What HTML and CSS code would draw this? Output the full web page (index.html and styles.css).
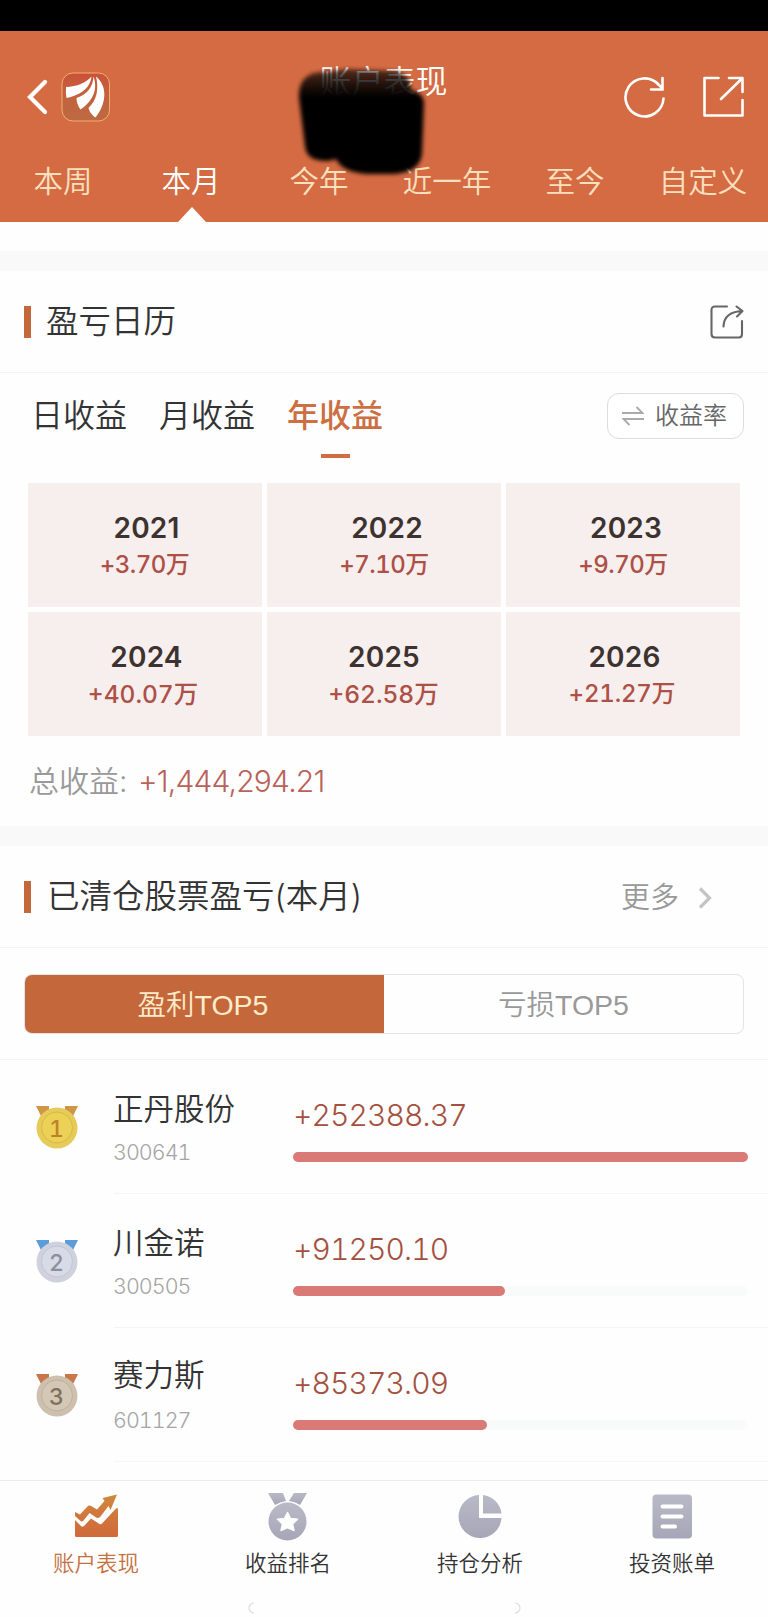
FILE: index.html
```html
<!DOCTYPE html>
<html lang="zh-CN">
<head>
    <meta charset="UTF-8">
    <meta name="viewport" content="width=device-width, initial-scale=1.0">
    <title>账户表现</title>
    <link rel="stylesheet" href="styles.css">
</head>
<body>
    <div class="status-bar"></div>
    <header class="header">
        <div class="header-top">
            <div class="header-left">
                <svg class="back" width="22" height="38" viewBox="0 0 22 38"><path d="M19 4 L4 19 L19 34" fill="none" stroke="#fff" stroke-width="4.2" stroke-linecap="round" stroke-linejoin="miter"/></svg>
                <svg width="50" height="50" viewBox="0 0 50 50">
                    <defs>
                        <linearGradient id="logoBg" x1="0" y1="0" x2="0" y2="1">
                            <stop offset="0" stop-color="#cb5038"/>
                            <stop offset="0.4" stop-color="#c4613d"/>
                            <stop offset="1" stop-color="#bd6a42"/>
                        </linearGradient>
                    </defs>
                    <rect x="1" y="1" width="47.5" height="48" rx="11" fill="url(#logoBg)" stroke="#f0b070" stroke-width="1"/>
                    <path d="M30.500 4.500 C25 11 16 14.500 5 15 Q4.500 21 5.500 26 C17 23.500 29 18 30.500 4.500Z" fill="#fff"/>
                    <path d="M32.500 4.500 C32 15 26 22.500 15.500 26 Q15.500 32 19.500 37.500 C31 30 37.500 18 32.500 4.500Z" fill="#fff"/>
                    <path d="M35 4.500 C38 17 36 28 27.500 36 Q29 42 34.500 45.500 C46 31 46.500 14 35 4.500Z" fill="#fff"/>
                </svg>
            </div>
            <h1 class="title">账户表现</h1>
            <div class="header-right">
                <svg width="42" height="42" viewBox="0 0 42 42" fill="none" stroke="#fff" stroke-width="2.6" stroke-linecap="round"><path d="M39.500 22.500 A19 19 0 1 1 34.500 8.500 L38 12"/><path d="M38.500 2 V13.500 H27"/></svg>
                <svg width="42" height="42" viewBox="0 0 42 42" fill="none" stroke="#fff" stroke-width="2.6" stroke-linecap="round" stroke-linejoin="round"><path d="M15.500 2 H1.500 V39.500 H39.500 V24"/><path d="M26 2 H39.500 V16 M39 2.500 L18 23"/></svg>
            </div>
        </div>
        <nav class="periods">
            <span>本周</span>
            <span class="active">本月</span>
            <span>今年</span>
            <span>近一年</span>
            <span>至今</span>
            <span>自定义</span>
        </nav>
        <svg class="scribble" width="144" height="120" viewBox="0 0 144 120">
            <defs>
                <linearGradient id="ink" x1="0" y1="0" x2="0" y2="1">
                    <stop offset="0" stop-color="#000" stop-opacity="0.6"/>
                    <stop offset="0.15" stop-color="#000" stop-opacity="0.84"/>
                    <stop offset="0.27" stop-color="#000"/>
                </linearGradient>
                <filter id="soft" x="-10%" y="-10%" width="120%" height="120%"><feGaussianBlur stdDeviation="2"/></filter>
            </defs>
            <path d="M24 9 L58 5 L104 7 Q120 9 121 26 Q134 29 134 40 L132 90 Q130 108 104 110 L76 110 Q52 108 46 95 Q36 99 24 95 Q16 92 15 82 L9 34 Q8 14 24 9Z" fill="url(#ink)" filter="url(#soft)"/>
        </svg>
    </header>

    <section class="card calendar">
        <div class="card-head">
            <h2>盈亏日历</h2>
            <svg width="34" height="34" viewBox="0 0 34 34" fill="none" stroke="#666" stroke-width="2.1" stroke-linecap="round" stroke-linejoin="round"><path d="M17 1.500 H5 Q1.500 1.500 1.500 5 V29 Q1.500 32.500 5 32.500 H29 Q32 32.500 32 29 V16"/><path d="M13.500 21.500 Q14 7 32 6 M26.500 1.500 L32.500 6 L27 11.500"/></svg>
        </div>
        <div class="calendar-tabs">
            <span>日收益</span>
            <span>月收益</span>
            <span class="active">年收益</span>
            <button class="rate-button">
                <svg width="22" height="20" viewBox="0 0 22 20" fill="none" stroke="#aaa" stroke-width="1.9"><path d="M0 7 H20.500 L14.500 1"/><path d="M22 13 H1.500 L7.500 19"/></svg>
                收益率
            </button>
        </div>
        <div class="years">
            <div class="year y2021"><b>2021</b><span>+3.70万</span></div>
            <div class="year y2022"><b>2022</b><span>+7.10万</span></div>
            <div class="year y2023"><b>2023</b><span>+9.70万</span></div>
            <div class="year y2024"><b>2024</b><span>+40.07万</span></div>
            <div class="year y2025"><b>2025</b><span>+62.58万</span></div>
            <div class="year y2026"><b>2026</b><span>+21.27万</span></div>
        </div>
        <div class="total">总收益: <span>+1,444,294.21</span></div>
    </section>

    <section class="card cleared">
        <div class="card-head">
            <h2>已清仓股票盈亏(本月)</h2>
            <a class="more">更多 <svg width="14" height="22" viewBox="0 0 14 22"><path d="M2 1.500 L11.500 11 L2 20.500" fill="none" stroke="#c4c4c4" stroke-width="3.2"/></svg></a>
        </div>
        <div class="toggle-wrap">
            <div class="toggle">
                <span class="active">盈利TOP5</span>
                <span>亏损TOP5</span>
            </div>
        </div>
        <div class="stock">
            <svg class="medal" width="42" height="43" viewBox="0 0 42 43">
                <path d="M0 0 H13 V8 L5 10Z M42 0 H29 V8 L37 10Z" fill="#cf9648"/>
                <circle cx="21" cy="22" r="20.5" fill="#e6cb58"/>
                <circle cx="21" cy="21.5" r="15.5" fill="#ebd257" stroke="#d6b748" stroke-width="1"/>
                <text x="20.5" y="30.5" text-anchor="middle" fill="#bf8128">1</text>
            </svg>
            <div class="stock-name"><strong>正丹股份</strong><small>300641</small></div>
            <div class="stock-profit"><span>+252388.37</span><div class="bar"><i style="width: 100%"></i></div></div>
        </div>
        <div class="stock">
            <svg class="medal" width="42" height="43" viewBox="0 0 42 43">
                <path d="M0 0 H13 V8 L5 10Z M42 0 H29 V8 L37 10Z" fill="#5b9cdb"/>
                <circle cx="21" cy="22" r="20.5" fill="#cfd1dc"/>
                <circle cx="21" cy="21.5" r="15.5" fill="#d7dae7" stroke="#c2c5d2" stroke-width="1"/>
                <text x="20.5" y="30.5" text-anchor="middle" fill="#8d8f9b">2</text>
            </svg>
            <div class="stock-name"><strong>川金诺</strong><small>300505</small></div>
            <div class="stock-profit"><span>+91250.10</span><div class="bar"><i style="width: 46.7%"></i></div></div>
        </div>
        <div class="stock third">
            <svg class="medal" width="42" height="43" viewBox="0 0 42 43">
                <path d="M0 0 H13 V8 L5 10Z M42 0 H29 V8 L37 10Z" fill="#c9764a"/>
                <circle cx="21" cy="22" r="20.5" fill="#cdc0ae"/>
                <circle cx="21" cy="21.5" r="15.5" fill="#d3c7b5" stroke="#beb09c" stroke-width="1"/>
                <text x="20.5" y="30.5" text-anchor="middle" fill="#82705f">3</text>
            </svg>
            <div class="stock-name"><strong>赛力斯</strong><small>601127</small></div>
            <div class="stock-profit"><span>+85373.09</span><div class="bar"><i style="width: 42.7%"></i></div></div>
        </div>
    </section>

    <nav class="bottom-nav">
        <a class="active">
            <svg width="48" height="48" viewBox="0 0 48 48">
                <defs>
                    <linearGradient id="orange" x1="0" y1="0" x2="0" y2="1"><stop offset="0" stop-color="#cf8a3c"/><stop offset="0.5" stop-color="#d1763d"/><stop offset="1" stop-color="#cf6a3a"/></linearGradient>
                    <linearGradient id="grey" x1="0" y1="0" x2="0" y2="1"><stop offset="0" stop-color="#b9b9c6"/><stop offset="1" stop-color="#a6a6b8"/></linearGradient>
                </defs>
                <path d="M3 19 L8 21.500 L15 14 Q17 11.500 20 13.500 L25 16.500 L32.500 8 L30.500 5 L45 1.500 L38.500 17 L36.500 13 L28.500 23.500 Q26.500 26 23.500 24 L17.500 20 L11.500 27.500 Q10 29.500 8 27.500 L3 23Z M3 27 L9 33 Q11 34.500 12.500 32.500 L19 25.500 L27.500 31 Q29 32 30.500 30 L43.500 16 Q46 13.500 46 17 V42.500 Q46 44 44.500 44 H4.500 Q3 44 3 42.500Z" fill="url(#orange)"/>
            </svg>
            账户表现
        </a>
        <a>
            <svg width="48" height="48" viewBox="0 0 48 48">
                <path d="M4 0 H19 L22 8 Q16 9 11 12Z M43 0 H30 L25 8 Q32 9 36 12Z" fill="url(#grey)"/>
                <circle cx="23.5" cy="28.5" r="19" fill="url(#grey)"/>
                <path d="M23.500 19.500 L26.500 25.500 L33.500 26.200 L28.500 31 L30 37.500 L23.500 34.500 L17 37.500 L18.500 31 L13.500 26.200 L20.500 25.500Z" fill="#fff" stroke="#fff" stroke-width="1.5" stroke-linejoin="round"/>
            </svg>
            收益排名
        </a>
        <a>
            <svg width="48" height="48" viewBox="0 0 48 48">
                <path d="M23 2 A21.500 21.500 0 1 0 45.500 25 H23Z M27 2 A21.500 21.500 0 0 1 45.500 20.500 H27Z" fill="url(#grey)"/>
            </svg>
            持仓分析
        </a>
        <a>
            <svg width="48" height="48" viewBox="0 0 48 48">
                <rect x="4.500" y="1.500" width="39.500" height="44" rx="4" fill="url(#grey)"/>
                <path d="M14.500 13.500 H33.500 M14.500 23.500 H33.500 M14.500 33.500 H27" stroke="#fff" stroke-width="4" stroke-linecap="round"/>
            </svg>
            投资账单
        </a>
    </nav>
    <div class="home-hint">
        <svg width="276" height="12" viewBox="0 0 276 12" fill="none" stroke="#ddd" stroke-width="1.2"><path d="M8 1 A5 5 0 0 0 8 11"/><path d="M269 1 A5 5 0 0 1 269 11"/></svg>
    </div>
</body>
</html>
```
FILE: styles.css
```css
* {
    box-sizing: border-box;
}
body {
    margin: 0;
    width: 768px;
    height: 1617px;
    overflow: hidden;
    background: #fefefe;
    color: #333;
    font-family: Inter, "Noto Sans CJK SC", sans-serif;
    font-weight: 350;
}
svg {
    display: block;
    flex: none;
}
.status-bar {
    height: 31px;
    background: #000;
}
.header {
    position: relative;
    height: 191px;
    background: #d56b43;
    color: #fff;
}
.header-top {
    display: grid;
    grid-template-columns: 1fr 132px 1fr;
    height: 110px;
    padding: 0 23px 0 26px;
}
.header-left {
    display: flex;
    align-items: center;
    gap: 13px;
    height: 132px;
}
.title {
    margin: 0;
    padding-top: 27px;
    font-size: 32px;
    line-height: 48px;
    font-weight: 350;
    white-space: nowrap;
}
.header-right {
    display: flex;
    justify-content: flex-end;
    align-items: center;
    gap: 37px;
    height: 132px;
}
.periods {
    display: grid;
    grid-template-columns: repeat(6, 128px);
    height: 81px;
    margin-left: -1px;
    font-size: 29.500px;
    line-height: 81px;
    text-align: center;
    color: #fbe0bf;
}
.periods .active {
    position: relative;
    color: #fff;
}
.periods .active::after {
    content: "";
    position: absolute;
    left: 51px;
    bottom: 0;
    border: 14px solid transparent;
    border-top: 0;
    border-bottom: 15px solid #fff;
}
.scribble {
    position: absolute;
    left: 290px;
    top: 33px;
}
.card {
    border-top: 20px solid #f9f9f9;
}
.calendar {
    margin-top: 29px;
    height: 575px;
}
.card-head {
    display: flex;
    justify-content: space-between;
    align-items: center;
    height: 102px;
    padding: 0 24px;
    border-bottom: 1px solid #f4f4f4;
}
.card-head h2 {
    display: flex;
    align-items: center;
    gap: 15px;
    margin: 0;
    font-size: 32.500px;
    line-height: 48px;
    font-weight: 350;
}
.card-head h2::before {
    content: "";
    width: 7px;
    height: 32px;
    background: #c4683c;
}
.calendar-tabs {
    display: flex;
    align-items: flex-start;
    gap: 32px;
    height: 110px;
    padding: 20px 24px 0 31px;
    font-size: 32px;
    line-height: 46px;
}
.calendar-tabs .active {
    position: relative;
    font-weight: 500;
    color: #cc6f42;
}
.calendar-tabs .active::after {
    content: "";
    position: absolute;
    left: 34px;
    top: 61px;
    width: 29px;
    height: 4px;
    background: #cc6f42;
}
.rate-button {
    display: flex;
    align-items: center;
    gap: 11px;
    width: 137px;
    height: 46px;
    margin-left: auto;
    padding: 0 0 0 14px;
    border: 1px solid #ddd;
    border-radius: 12px;
    background: #fff;
    color: #666;
    font: inherit;
    font-size: 24px;
}
.years {
    display: grid;
    grid-template-columns: repeat(3, 1fr);
    grid-auto-rows: 124px;
    gap: 5px;
    padding: 0 28px 0 28px;
}
.year {
    display: flex;
    flex-direction: column;
    align-items: center;
    padding-top: 27px;
    background: #f7eeee;
}
.year b {
    padding-left: 3px;
    font-size: 28px;
    line-height: 36px;
    font-weight: 600;
    letter-spacing: 0.2px;
    color: #3c3230;
}
.year span {
    font-size: 24px;
    line-height: 38px;
    font-weight: 450;
    letter-spacing: -0.500px;
    color: #ad5046;
    font-variant-numeric: tabular-nums;
}
.y2022 b,
.y2023 b {
    padding-left: 6px;
}
.y2021 span {
    padding-right: 1px;
}
.y2024 span,
.y2025 span {
    font-size: 24.500px;
    letter-spacing: 0;
}
.y2024 span {
    padding-right: 4px;
}
.y2025 b {
    padding-left: 0;
}
.y2025 span {
    padding-right: 1px;
}
.y2026 span {
    padding-right: 2px;
    letter-spacing: -0.200px;
}
.total {
    padding: 21px 29px 0;
    font-size: 30px;
    line-height: 48px;
    color: #999;
}
.total span {
    margin-left: 2px;
    letter-spacing: -0.800px;
    color: #b8625a;
}
.cleared {
    height: 654px;
}
.cleared h2 {
    gap: 16px;
    padding-top: 1px;
}
.more {
    display: flex;
    align-items: center;
    gap: 19px;
    padding: 2px 32px 0 0;
    font-size: 29px;
    line-height: 46px;
    color: #999;
}
.toggle-wrap {
    padding: 26px 24px 25px;
    border-bottom: 1px solid #f4f4f4;
}
.toggle {
    display: grid;
    grid-template-columns: 1fr 1fr;
    height: 60px;
    border: 1px solid #e4e4e4;
    border-radius: 8px;
    overflow: hidden;
    font-family: "Liberation Sans", "Noto Sans CJK SC", sans-serif;
    font-size: 28.500px;
    line-height: 60px;
    text-align: center;
    color: #999;
}
.toggle .active {
    margin: -1px 0 -1px -1px;
    padding-right: 2px;
    line-height: 62px;
    background: #c4683c;
    color: #fdeccb;
}
.stock {
    display: flex;
    height: 134px;
    padding: 0 20px 0 36px;
    background: linear-gradient(#f5f5f5, #f5f5f5) 114px 100% / 654px 1px no-repeat;
    font-variant-numeric: tabular-nums;
}
.medal {
    margin-top: 46px;
}
.medal text {
    font-size: 23px;
    font-weight: 500;
}
.stock-name {
    display: flex;
    flex-direction: column;
    width: 180px;
    margin-left: 35px;
    padding-top: 26px;
}
.stock-name strong {
    font-size: 30.500px;
    line-height: 46px;
    font-weight: 350;
}
.stock-name small {
    padding-top: 5px;
    font-size: 21.500px;
    line-height: 30px;
    letter-spacing: -1px;
    color: #a5a5a5;
}
.third .stock-name strong {
    margin: -2px 0 2px;
}
.stock-profit {
    flex: 1;
    padding-top: 36px;
    font-size: 30px;
    line-height: 38px;
    letter-spacing: -0.900px;
    color: #a5503f;
}
.bar {
    height: 10px;
    margin-top: 18px;
    border-radius: 5px;
    background: #f9fafa;
}
.bar i {
    display: block;
    height: 10px;
    border-radius: 5px;
    background: #d97a76;
}
.bottom-nav {
    display: grid;
    grid-template-columns: repeat(4, 192px);
    height: 122px;
    border-top: 1px solid #ececec;
}
.bottom-nav a {
    display: flex;
    flex-direction: column;
    align-items: center;
    padding-top: 12px;
    font-size: 21.500px;
    line-height: 44px;
}
.bottom-nav .active {
    color: #c4703f;
}
.home-hint {
    padding-left: 246px;
}
```
